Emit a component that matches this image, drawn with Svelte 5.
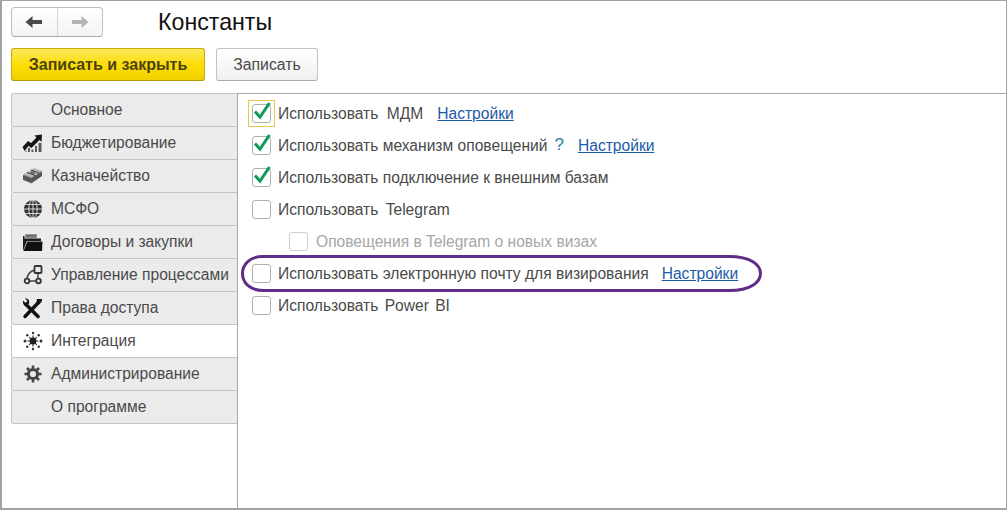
<script>
  const tabs = [
    { label: 'Основное', icon: '' },
    { label: 'Бюджетирование', icon: 'chart' },
    { label: 'Казначейство', icon: 'money' },
    { label: 'МСФО', icon: 'globe' },
    { label: 'Договоры и закупки', icon: 'folder' },
    { label: 'Управление процессами', icon: 'flow' },
    { label: 'Права доступа', icon: 'tools' },
    { label: 'Интеграция', icon: 'spark', active: true },
    { label: 'Администрирование', icon: 'gear' },
    { label: 'О программе', icon: '' },
  ];

  // ws: extra word spacing where the reference renders latin/caps words wider
  const options = [
    { label: 'Использовать МДМ', checked: true, focused: true, link: true, ws: 4 },
    { label: 'Использовать механизм оповещений', checked: true, help: true, link: true },
    { label: 'Использовать подключение к внешним базам', checked: true },
    { label: 'Использовать Telegram', ws: 3 },
    { label: 'Оповещения в Telegram о новых визах', sub: true },
    { label: 'Использовать электронную почту для визирования', link: true, wide: true },
    { label: 'Использовать Power BI', ws: 2 },
  ];
</script>

<div class="window">
  <div class="head">
    <div class="nav">
      <button class="nav-btn" type="button" aria-label="Назад">
        <svg width="18" height="14" viewBox="0 0 18 14"><path d="M0.5 7 L7.5 1 V5 H17 V9 H7.5 V13 Z" fill="#4a4a4a" /></svg>
      </button>
      <button class="nav-btn" type="button" aria-label="Вперёд">
        <svg width="18" height="14" viewBox="0 0 18 14"><path d="M17.5 7 L10.5 1 V5 H1 V9 H10.5 V13 Z" fill="#b4b4b4" /></svg>
      </button>
    </div>
    <h1>Константы</h1>
  </div>

  <div class="actions">
    <button class="btn primary" type="button">Записать и закрыть</button>
    <button class="btn" type="button">Записать</button>
  </div>

  <div class="body">
    <div class="tabs">
      {#each tabs as tab}
        <div class="tab" class:active={tab.active}>
          <span class="tab-icon">
            {#if tab.icon === 'chart'}
              <svg width="21" height="19" viewBox="0 0 21 19">
                <path d="M0.5 13 L6 7 L9 9 L14.5 3.5 L12.5 1.5 L20 0.5 L19.5 8 L17.5 6 L9.5 14 L6.5 12 L2.5 17 Z" fill="#161616" />
                <path d="M3 18 L4.5 16 V18 Z M6 18 V14 H8 V18 Z M9.5 18 V15.5 H11.5 V18 Z M13 18 V12 H15 V18 Z M16.5 18 V9 H19.5 V18 Z" fill="#5a5a5a" />
              </svg>
            {:else if tab.icon === 'money'}
              <svg width="21" height="18" viewBox="0 0 21 18">
                <path d="M1 8 L12 1.5 L20 4.5 V9 L9.5 16.5 L1 13 Z" fill="#6f6f6f" />
                <path d="M1 7.5 L12 1 L20 4 L9.5 10.5 Z" fill="#b8b8b8" />
                <path d="M1 9.5 L9.5 12.5 L20 6 M1 11.5 L9.5 14.5 L20 8 M5 5.5 L13 8.5 M9 3 L17 6" stroke="#3f3f3f" stroke-width="1" fill="none" />
                <ellipse cx="10.5" cy="5.8" rx="2.6" ry="1.5" fill="#6a6a6a" />
              </svg>
            {:else if tab.icon === 'globe'}
              <svg width="20" height="20" viewBox="0 0 20 20">
                <circle cx="10" cy="10" r="9" fill="#333" />
                <g stroke="#e6e6e6" stroke-width="0.9" fill="none">
                  <ellipse cx="10" cy="10" rx="4.2" ry="9" />
                  <path d="M10 1 V19 M1 10 H19 M2.5 5.5 H17.5 M2.5 14.5 H17.5" />
                </g>
              </svg>
            {:else if tab.icon === 'folder'}
              <svg width="21" height="19" viewBox="0 0 21 19">
                <path d="M3 1 H15 V5 H3 Z" fill="#9a9a9a" />
                <path d="M4 2.5 H14 M4 4 H14" stroke="#555" stroke-width="0.8" />
                <path d="M1 3 H2.5 V5.5 H19 V8 H5 L1 18 Z" fill="#1f1f1f" />
                <path d="M5.5 8.5 H20.5 L20 18 H1.5 Z" fill="#111" />
              </svg>
            {:else if tab.icon === 'flow'}
              <svg width="20" height="20" viewBox="0 0 20 20">
                <path d="M12 5 C7 6 5 9 4 13 M6 16 H13" stroke="#444" stroke-width="1.5" fill="none" />
                <path d="M15 8 V13" stroke="#444" stroke-width="1.5" />
                <rect x="11.5" y="1" width="7" height="7" rx="1" fill="none" stroke="#333" stroke-width="1.8" />
                <circle cx="4" cy="16" r="2.3" fill="none" stroke="#333" stroke-width="1.8" />
                <circle cx="15.5" cy="16" r="2.3" fill="none" stroke="#333" stroke-width="1.8" />
              </svg>
            {:else if tab.icon === 'tools'}
              <svg width="21" height="21" viewBox="0 0 21 21">
                <path d="M3 18.5 L17 4" stroke="#111" stroke-width="3.4" stroke-linecap="round" />
                <path d="M15 1 L20 1 L20 3 L17 6.5 L14.5 4 Z" fill="#111" />
                <path d="M4 6.5 L16 18.5" stroke="#111" stroke-width="3.6" stroke-linecap="round" />
                <path d="M1 2.5 L3.5 5 L5.5 3 L3 0.5 C6 0 8 2.5 7 5.5 L4.5 8 C2 8 0.5 5.5 1 2.5 Z" fill="#111" />
              </svg>
            {:else if tab.icon === 'spark'}
              <svg width="20" height="20" viewBox="0 0 20 20">
                <circle cx="10" cy="10" r="3.4" fill="#1f1f1f" />
                <g stroke="#2c2c2c" stroke-width="1.1">
                  <path d="M10 4.5 V7 M10 13 V15.5 M4.5 10 H7 M13 10 H15.5 M6.2 6.2 L8 8 M13.8 6.2 L12 8 M6.2 13.8 L8 12 M13.8 13.8 L12 12" />
                </g>
                <g fill="#333">
                  <circle cx="10" cy="2" r="1.2" />
                  <circle cx="10" cy="18" r="1.2" />
                  <circle cx="2" cy="10" r="1.5" />
                  <circle cx="18" cy="10" r="1.5" />
                  <circle cx="4.3" cy="4.3" r="1.2" />
                  <circle cx="15.7" cy="4.3" r="1.2" />
                  <circle cx="4.3" cy="15.7" r="1.2" />
                  <circle cx="15.7" cy="15.7" r="1.2" />
                </g>
              </svg>
            {:else if tab.icon === 'gear'}
              <svg width="18" height="18" viewBox="0 0 18 18">
                <circle cx="9" cy="9" r="4.6" fill="none" stroke="#444" stroke-width="3" />
                <path d="M9 0.5 V3.5 M9 14.5 V17.5 M0.5 9 H3.5 M14.5 9 H17.5 M3 3 L5 5 M15 3 L13 5 M3 15 L5 13 M15 15 L13 13" stroke="#444" stroke-width="2.6" />
              </svg>
            {/if}
          </span>
          <span>{tab.label}</span>
        </div>
      {/each}
    </div>

    <div class="panel">
      {#each options as opt}
        <div class="row" class:sub={opt.sub} class:wide={opt.wide}>
          <span class="box-wrap" class:focused={opt.focused}>
            <span class="box"></span>
            {#if opt.checked}
              <svg class="check" width="19" height="20" viewBox="0 0 19 20"><path d="M3 10.5 L8 16 L17.5 2" fill="none" stroke="#0e9a57" stroke-width="3" /></svg>
            {/if}
          </span>
          <span class="label" style:word-spacing={opt.ws ? opt.ws + 'px' : null}>{opt.label}</span>
          {#if opt.help}<span class="help">?</span>{/if}
          {#if opt.link}<a href="#settings">Настройки</a>{/if}
          {#if opt.wide}
            <svg class="ring" width="521" height="37" viewBox="0 0 521 37">
              <path d="M22 1.5 H488 C510 1.5 519.5 10 519.5 18.5 C519.5 27 510 35.5 488 35.5 H22 C8 35.5 1.5 27 1.5 18.5 C1.5 10 8 1.5 22 1.5 Z" fill="none" stroke="#5f2c87" stroke-width="3" />
            </svg>
          {/if}
        </div>
      {/each}
    </div>
  </div>
</div>

<style>
  :global(body) {
    margin: 0;
    background: #fff;
  }

  .window {
    box-sizing: border-box;
    width: 1007px;
    height: 510px;
    display: flex;
    flex-direction: column;
    border: 1px solid #a3a3a3;
    border-left-width: 2px;
    border-bottom-width: 2px;
    font-family: "Liberation Sans", Arial, sans-serif;
    font-size: 15.6px;
    color: #4a4a4a;
    overflow: hidden;
  }

  .head {
    display: flex;
    align-items: center;
    height: 30px;
    margin-top: 6px;
    padding-left: 9px;
  }
  .nav {
    display: flex;
    width: 92px;
    height: 30px;
    box-sizing: border-box;
    border: 1px solid #c0c0c0;
    border-bottom-color: #a8a8a8;
    border-radius: 4px;
    background: linear-gradient(#fff, #f3f3f3);
  }
  .nav-btn {
    flex: 1;
    padding: 0;
    border: 0;
    background: none;
    display: flex;
    align-items: center;
    justify-content: center;
  }
  .nav-btn + .nav-btn {
    border-left: 1px solid #d4d4d4;
  }
  h1 {
    margin: 0 0 0 55px;
    font-size: 23.2px;
    font-weight: 400;
    color: #111;
  }

  .actions {
    display: flex;
    gap: 11px;
    margin-top: 11px;
    padding-left: 9px;
  }
  .btn {
    height: 33px;
    width: 102px;
    box-sizing: border-box;
    border: 1px solid #c2c2c2;
    border-bottom-color: #a9a9a9;
    border-radius: 3px;
    background: linear-gradient(#fff, #f0f0f0);
    font: inherit;
    font-size: 15.8px;
    color: #4a4a4a;
    padding: 0;
  }
  .primary {
    width: 194px;
    border-color: #c9aa0a;
    border-bottom-color: #b39700;
    background: linear-gradient(#fbe85c, #fddc00 55%, #f2d000);
    font-size: 16px;
    font-weight: 700;
    color: #4a4312;
  }

  .body {
    flex: 1;
    display: flex;
    margin-top: 12px;
    padding-left: 9px;
  }

  .tabs {
    width: 227px;
    flex: none;
    display: flex;
    flex-direction: column;
  }
  .tab {
    box-sizing: border-box;
    height: 33px;
    display: flex;
    align-items: center;
    gap: 6px;
    padding-left: 9px;
    background: #ebebeb;
    border: 1px solid #c4c4c4;
    border-top: 0;
    border-right: 1px solid #a8a8a8;
    border-radius: 0 0 0 3px;
    white-space: nowrap;
  }
  .tab:first-child {
    height: 34px;
    border-top: 1px solid #c4c4c4;
    border-radius: 3px 0 0 3px;
  }
  .tab.active {
    background: #fff;
    border-right-color: #fff;
  }
  .tab-icon {
    width: 25px;
    height: 22px;
    flex: none;
    display: flex;
    align-items: center;
    justify-content: center;
    margin-left: -1px;
  }

  .panel {
    flex: 1;
    border-top: 1px solid #a8a8a8;
    border-left: 1px solid #a8a8a8;
    margin-left: -1px;
    padding-top: 4px;
  }
  .row {
    position: relative;
    height: 32px;
    display: flex;
    align-items: center;
    padding-left: 14px;
    white-space: nowrap;
  }
  .row.sub {
    padding-left: 51px;
    color: #a6a6a6;
  }
  .sub .label {
    margin-left: 1px;
  }
  .box-wrap {
    position: relative;
    width: 19px;
    height: 19px;
    flex: none;
    margin-right: 7px;
    margin-bottom: 2px;
  }
  .box {
    display: block;
    box-sizing: border-box;
    width: 19px;
    height: 19px;
    border: 1px solid #b0b0b0;
    border-radius: 3px;
    background: #fff;
  }
  .sub .box {
    border-color: #cfcfcf;
  }
  .focused::before {
    content: "";
    position: absolute;
    inset: -4px;
    border: 1px solid #e9c94a;
  }
  .check {
    position: absolute;
    left: 0;
    top: -3px;
  }
  .help {
    margin-left: 7px;
    margin-bottom: 2px;
    color: #1f7d9c;
    font-size: 17px;
  }
  a {
    margin-left: 14px;
    color: #1c5aa8;
    text-decoration: underline;
  }
  .wide a {
    margin-left: 13px;
  }
  .ring {
    position: absolute;
    left: 3px;
    top: -3px;
    pointer-events: none;
  }
</style>
